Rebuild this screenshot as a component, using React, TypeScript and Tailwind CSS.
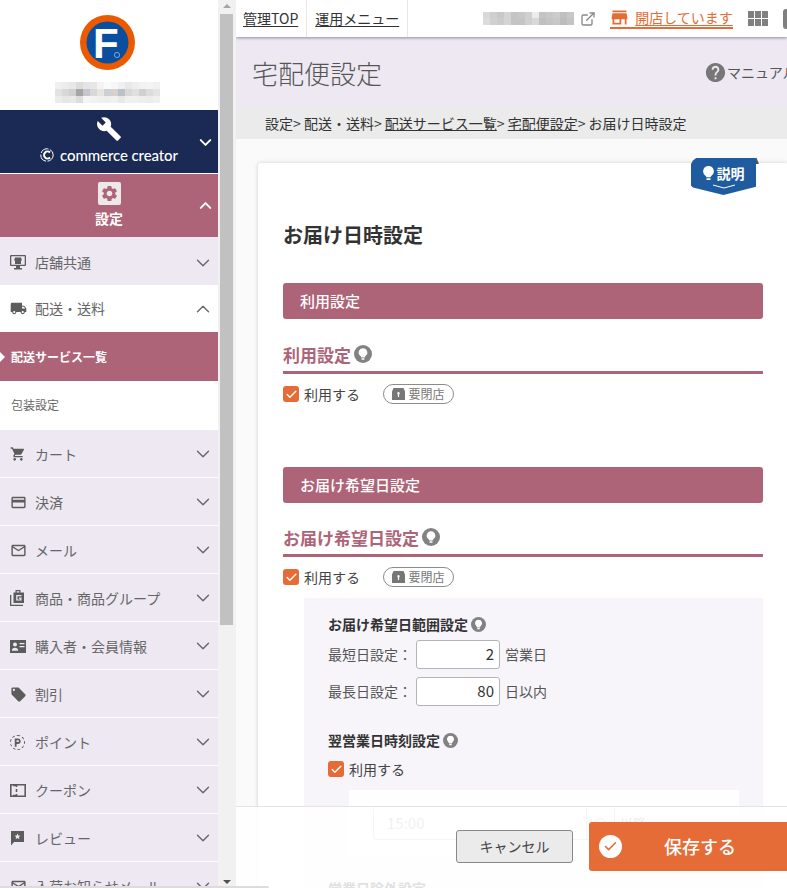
import { ChevronDown, ChevronUp, ExternalLink, Check } from "lucide-react";
import {
    MdCreditCard,
    MdLocalOffer,
    MdLocalShipping,
    MdMailOutline,
    MdShoppingCart,
    MdStore,
    MdHelp,
    MdSettings,
    MdBuild,
    MdOutlineLocalParking,
} from "react-icons/md";
import type { ReactNode } from "react";

const FONT = "font-['Noto_Sans_CJK_JP','Noto_Sans',sans-serif]";

const shopNamePixels = [
    "#f0f0f0", "#ececec", "#e8e8e8", "#dcdcdc", "#e4e4e4", "#e6e6e6", "#f4f4f4", "#fafafa", "#f4f6f8", "#f0f0f0", "#e8e8e8", "#eeeeee", "#f2f2f2", "#f4f4f4", "#f0f0f0",
    "#e2e2e2", "#d8d8d8", "#d0d0d0", "#a8a4a4", "#c4c8cc", "#d8d8d8", "#e8e4e0", "#ccd0d4", "#d8d0cc", "#bcc0c8", "#d8d8d8", "#e0e0e0", "#d0d0d0", "#dcdcdc", "#e4e4e4",
    "#ececec", "#e6e6e6", "#e8e8e8", "#dcdcdc", "#f4f6f6", "#f2f2f2", "#f0f0f0", "#eeeeee", "#f0f0f0", "#e8e8e8", "#f0f0f0", "#f0f0f0", "#eeeeee", "#ececec", "#f0f0f0",
];

const urlPixels = [
    "#d8d8d8", "#cfcfcf", "#c8c8c8", "#d4d4d4", "#c4c4c4", "#c8c8c8", "#d0d0d0", "#ececec", "#c4c4c4", "#c8c8c8", "#cccccc", "#c0c0c0", "#c8c8c8",
    "#dcdcdc", "#d0d0d0", "#cccccc", "#d4d4d4", "#c4c4c4", "#c4c4c4", "#d0d0d0", "#d8d8d8", "#c0c0c0", "#c4c4c4", "#c8c8c8", "#bcbcbc", "#c4c4c4",
];

function Bulb({ size = 18 }: { size?: number }) {
    return (
        <svg width={size} height={size} viewBox="0 0 18 18" className="shrink-0">
            <circle cx="9" cy="9" r="9" fill="#828282" />
            <path d="M9 3.200a4.300 4.300 0 0 0-2.500 7.800c.5.400.7.900.7 1.500h3.600c0-.6.200-1.100.7-1.500A4.300 4.300 0 0 0 9 3.200Z" fill="#fff" />
            <rect x="7.400" y="13.200" width="3.200" height="1.500" rx=".6" fill="#fff" />
        </svg>
    );
}

function CheckBox() {
    return (
        <span className="flex h-4 w-4 shrink-0 items-center justify-center rounded-[3px] bg-[#e66c37]">
            <Check size={13} strokeWidth={2.5} className="text-white" />
        </span>
    );
}

function MonitorIcon() {
    return (
        <svg width="16" height="15" viewBox="0 0 16 15" fill="#5c5c5c">
            <path d="M1 0h14a1 1 0 0 1 1 1v9a1 1 0 0 1-1 1h-5v2h2v1.500H4V13h2v-2H1a1 1 0 0 1-1-1V1a1 1 0 0 1 1-1Zm.300 1.300v8.400h13.400V1.300Z" />
            <path d="M5 2.500h6l.8 2.200v.8H11V9H5V5.500h-.8v-.8Z" />
        </svg>
    );
}

function BagIcon() {
    return (
        <svg width="16" height="16" viewBox="0 0 16 16" fill="#5c5c5c">
            <path d="M5.500 0h5v2.500H14V13H3.500V2.500h2Zm1.200 1.200v1.300h2.600V1.200ZM6.200 5v5.500h5.300V7.500H9v1.200h1.200v.7H7.500V6.200h4V5Z" fillRule="evenodd" />
            <path d="M0 5h1.300v9.700H13V16H0Z" />
        </svg>
    );
}

function MemberIcon() {
    return (
        <svg width="16" height="13" viewBox="0 0 16 13" fill="#5c5c5c">
            <path d="M0 0h16v13H0Zm5 2.500a2 2 0 1 0 0 4 2 2 0 0 0 0-4ZM1.800 10.700h6.400c0-2-1.400-3-3.200-3s-3.200 1-3.200 3ZM9.500 3v1.300h5V3Zm0 3v1.300h5V6Z" fillRule="evenodd" />
        </svg>
    );
}

function CouponIcon() {
    return (
        <svg width="16" height="13" viewBox="0 0 16 13" fill="none" stroke="#5c5c5c" strokeWidth="1.600">
            <path d="M.8.800h14.400v11.400H.8Z" />
            <path d="M6.500 0v3M6.500 5v3M6.500 10v3" />
            <path d="M3 .8h3v1.500H3Zm0 9.900h3v1.500H3Z" fill="#5c5c5c" stroke="none" />
        </svg>
    );
}

function ReviewIcon() {
    return (
        <svg width="15" height="15" viewBox="0 0 15 15">
            <path d="M1 0h13v11H4l-3 3.500Z" fill="#5c5c5c" />
            <path d="m7.500 2.500.9 2 2.100.2-1.600 1.400.5 2.100-1.900-1.100-1.900 1.100.5-2.100-1.600-1.400 2.100-.2Z" fill="#ede8f2" />
        </svg>
    );
}

function NavRow({ icon, label, open, white, first }: { icon: ReactNode; label: string; open?: boolean; white?: boolean; first?: boolean }) {
    return (
        <div
            className={`flex shrink-0 items-center justify-between pl-[10px] pr-[4px] text-[14px] text-[#666] ${white ? "h-[47px] bg-white" : first ? "h-[48px] bg-[#ede8f2] pt-[3px]" : "h-[48px] border-b border-white bg-[#ede8f2] pt-[1px]"}`}
        >
            <div className="flex items-center">
                <span className="flex w-[25px] shrink-0 items-center text-[#5c5c5c]">{icon}</span>
                <span>{label}</span>
            </div>
            {open ? <ChevronUp size={22} strokeWidth={1.5} className="text-[#666]" /> : <ChevronDown size={22} strokeWidth={1.5} className="text-[#666]" />}
        </div>
    );
}

function SectionBand({ children }: { children: ReactNode }) {
    return <div className="flex h-[36px] items-center rounded-[3px] bg-[#ae6478] pl-[17px] text-[15px] font-medium text-white">{children}</div>;
}

function SubHeading({ children }: { children: ReactNode }) {
    return (
        <div className="flex h-[34px] items-center gap-[3px] border-b-[3px] border-[#ae6478] pb-[3px] text-[17px] font-bold leading-none text-[#ae6478]">
            {children}
            <Bulb />
        </div>
    );
}

function UseRow() {
    return (
        <div className="flex h-[40px] items-center text-[14px] text-[#444]">
            <CheckBox />
            <span className="ml-[5px]">利用する</span>
            <span className="ml-[23px] flex h-[20px] w-[71px] items-center justify-center gap-[3px] rounded-full border border-[#8c8c8c] bg-white text-[12px] text-[#777]">
                <svg width="13" height="12" viewBox="0 0 13 12" fill="#777">
                    <path d="M1.500 0h10L13 3.500V12H0V3.500ZM6.500 4a1.300 1.300 0 0 0-.6 2.400V9h1.200V6.400A1.300 1.300 0 0 0 6.500 4Z" fillRule="evenodd" />
                </svg>
                要閉店
            </span>
        </div>
    );
}

function RangeRow({ label, value, unit }: { label: string; value: string; unit: string }) {
    return (
        <div className="flex h-[37px] items-center text-[14px] text-[#555]">
            <span className="w-[88px]">{label}</span>
            <span className="flex h-[29px] w-[84px] items-center justify-end rounded-[3px] border border-[#b4b4b4] bg-white pr-[5px] text-[15px] text-[#333]">{value}</span>
            <span className="ml-[5px]">{unit}</span>
        </div>
    );
}

export default function App() {
    return (
        <div className={`relative flex h-[888px] w-[787px] overflow-hidden bg-white ${FONT}`}>
            <aside className="relative flex h-full w-[236px] shrink-0">
                <div className="flex h-full w-[218px] shrink-0 flex-col overflow-hidden">
                    <div className="flex h-[110px] shrink-0 flex-col items-center pr-[3px]">
                        <svg width="55" height="55" viewBox="0 0 55 55" className="mt-[15px]">
                            <circle cx="27.500" cy="27.500" r="27.500" fill="#ec5a00" />
                            <circle cx="27.500" cy="27.500" r="21" fill="#0a4ea0" />
                            <text x="13" y="43" fontFamily="Liberation Sans" fontWeight="700" fontSize="42" fill="#fff">F</text>
                            <circle cx="37" cy="40" r="2.600" fill="none" stroke="#9fb9d8" strokeWidth=".8" />
                        </svg>
                        <div className="mt-[12px] grid grid-cols-[repeat(15,7px)] grid-rows-[7px_7px_7px]">
                            {shopNamePixels.map((color, i) => (
                                <span key={i} style={{ backgroundColor: color }} />
                            ))}
                        </div>
                    </div>
                    <div className="relative flex h-[63px] shrink-0 flex-col items-center bg-[#1b2a54] text-white">
                        <MdBuild size={26} className="mt-[6px]" />
                        <div className="mt-[3px] flex items-center text-[15px] font-medium leading-[20px] tracking-[-0.1px]">
                            <svg width="14" height="14" viewBox="0 0 14 14" className="mr-[6px]" fill="none" stroke="#fff">
                                <circle cx="7" cy="7" r="6.200" strokeWidth="1" strokeDasharray="9 1.500" />
                                <path d="M10 4.500a3.500 3.500 0 1 0 0 5" strokeWidth="2" />
                            </svg>
                            <span className="font-['Lato',sans-serif]">commerce creator</span>
                        </div>
                        <ChevronDown size={19} strokeWidth={2.5} className="absolute right-[3px] top-[23px]" />
                    </div>
                    <div className="relative mt-[1px] flex h-[63px] shrink-0 flex-col items-center bg-[#ae6478] text-white">
                        <span className="mt-[8px] flex h-[23px] w-[23px] items-center justify-center rounded-[2px] bg-[#ede8ea]">
                            <MdSettings size={19} className="text-[#ae6478]" />
                        </span>
                        <span className="mt-[3px] text-[14px] font-bold leading-[20px]">設定</span>
                        <ChevronUp size={19} strokeWidth={2.5} className="absolute right-[3px] top-[22px]" />
                    </div>
                    <NavRow icon={<MonitorIcon />} label="店舗共通" first />
                    <NavRow icon={<MdLocalShipping size={17} />} label="配送・送料" open white />
                    <div className="relative flex h-[49px] shrink-0 items-center bg-[#ae6478] pl-[11px] text-[12px] font-bold text-white">
                        <span className="absolute left-0 top-[20px] h-0 w-0 border-y-[5px] border-l-[5px] border-y-transparent border-l-white" />
                        配送サービス一覧
                    </div>
                    <div className="flex h-[49px] shrink-0 items-center bg-white pb-[2px] pl-[11px] text-[12px] text-[#666]">包装設定</div>
                    <NavRow icon={<MdShoppingCart size={16} />} label="カート" />
                    <NavRow icon={<MdCreditCard size={17} />} label="決済" />
                    <NavRow icon={<MdMailOutline size={17} />} label="メール" />
                    <NavRow icon={<BagIcon />} label="商品・商品グループ" />
                    <NavRow icon={<MemberIcon />} label="購入者・会員情報" />
                    <NavRow icon={<MdLocalOffer size={17} />} label="割引" />
                    <NavRow
                        icon={
                            <span className="flex h-[15px] w-[15px] items-center justify-center rounded-full border border-dashed border-[#5c5c5c]">
                                <MdOutlineLocalParking size={11} />
                            </span>
                        }
                        label="ポイント"
                    />
                    <NavRow icon={<CouponIcon />} label="クーポン" />
                    <NavRow icon={<ReviewIcon />} label="レビュー" />
                    <NavRow icon={<MdMailOutline size={17} />} label="入荷お知らせメール" />
                </div>
                <div className="relative h-full w-[18px] bg-[#f1f1f1]">
                    <span className="absolute left-[5px] top-[4px] h-0 w-0 border-x-[4px] border-b-[4px] border-x-transparent border-b-[#a3a3a3]" />
                    <span className="absolute left-[2px] top-[14px] h-[611px] w-[13px] bg-[#c1c1c1]" />
                    <span className="absolute bottom-[4px] left-[5px] h-0 w-0 border-x-[4px] border-t-[4px] border-x-transparent border-t-[#505050]" />
                </div>
            </aside>

            <main className="relative h-full min-w-0 flex-1 overflow-hidden bg-[#fafafa]">
                <header className="relative z-10 flex h-[37px] items-center bg-white shadow-[0_1px_3px_rgba(0,0,0,0.4)]">
                    <div className="flex h-full shrink-0 items-center border-r border-[#e8e8e8] pl-[7px] pr-[8px] text-[14px] whitespace-nowrap text-[#333] underline underline-offset-2">管理TOP</div>
                    <div className="flex h-full shrink-0 items-center border-r border-[#e8e8e8] pl-[8px] pr-[8px] text-[14px] whitespace-nowrap text-[#333] underline underline-offset-2">運用メニュー</div>
                    <div className="ml-[75px] grid shrink-0 grid-cols-[repeat(13,7px)] grid-rows-[6px_7px]">
                        {urlPixels.map((color, i) => (
                            <span key={i} style={{ backgroundColor: color }} />
                        ))}
                    </div>
                    <ExternalLink size={16} className="ml-[6px] shrink-0 text-[#888]" />
                    <div className="ml-[14px] flex h-[21px] shrink-0 items-center gap-[5px] border-b-[2px] border-[#e66c37] text-[14px] whitespace-nowrap text-[#e66c37]">
                        <MdStore size={21} className="-ml-[1px] shrink-0" />
                        <span className="underline underline-offset-2">開店しています</span>
                    </div>
                    <div className="ml-[15px] grid shrink-0 grid-cols-[6px_6px_6px] grid-rows-[7px_7px] gap-[1px]">
                        {[0, 1, 2, 3, 4, 5].map((i) => (
                            <span key={i} className="bg-[#808080]" />
                        ))}
                    </div>
                    <span className="ml-[15px] h-[20px] w-[10px] shrink-0 rounded-l-[3px] bg-[#808080]" />
                </header>

                <div className="flex h-[70px] items-center justify-between bg-[#ede8f2] pl-[16px]">
                    <h1 className="text-[26px] font-light text-[#555]">宅配便設定</h1>
                    <div className="flex w-[82px] shrink-0 items-center text-[14px] whitespace-nowrap text-[#555]">
                        <MdHelp size={23} className="-ml-[1px] shrink-0 text-[#777]" />
                        マニュアル
                    </div>
                </div>

                <div className="flex h-[32px] items-center bg-[#ebebeb] pl-[29px] text-[14px] whitespace-pre text-[#333]">
                    {"設定> 配送・送料> "}
                    <span className="underline">配送サービス一覧</span>
                    {"> "}
                    <span className="underline">宅配便設定</span>
                    {"> お届け日時設定"}
                </div>

                <div className="relative ml-[22px] mt-[24px] w-[530px] rounded-[3px] bg-white px-[25px] shadow-[0_0_4px_rgba(0,0,0,0.18)]">
                    <span className="absolute left-[495px] top-[-5px] h-[6px] w-[6px] bg-[#555] [clip-path:polygon(0_0,60%_0,100%_100%,0_100%)]" />
                    <div className="absolute left-[433px] top-[-5px] flex h-[37px] w-[65px] flex-col items-center bg-[#1f5c9f] pt-[6px] text-white [clip-path:polygon(0_16%,3%_7%,8%_0,92%_0,100%_0,100%_78%,50%_100%,3%_80%,0_74%)]">
                        <div className="flex items-center gap-[3px] text-[14px] font-bold leading-[18px]">
                            <svg width="11" height="15" viewBox="0 0 11 15" fill="#fff">
                                <path d="M5.500 0a5.300 5.300 0 0 0-3 9.700c.6.400.8 1 .8 1.600h4.400c0-.6.200-1.200.8-1.600A5.300 5.300 0 0 0 5.500 0ZM3.500 12.300h4V14h-4Z" />
                            </svg>
                            説明
                        </div>
                        <svg width="22" height="5" viewBox="0 0 22 5" className="mt-[2px]" fill="none" stroke="#fff" strokeWidth="1">
                            <path d="M0 1l11 3 11-3" />
                        </svg>
                    </div>

                    <h2 className="pt-[56px] text-[20px] leading-[32px] font-bold text-[#333]">お届け日時設定</h2>
                    <div className="mt-[32px]">
                        <SectionBand>利用設定</SectionBand>
                    </div>
                    <div className="mt-[21px]">
                        <SubHeading>利用設定</SubHeading>
                    </div>
                    <UseRow />

                    <div className="mt-[53px]">
                        <SectionBand>お届け希望日設定</SectionBand>
                    </div>
                    <div className="mt-[20px]">
                        <SubHeading>お届け希望日設定</SubHeading>
                    </div>
                    <UseRow />

                    <div className="ml-[21px] mt-[1px] bg-[#f7f5fa] pl-[24px] pr-[24px] pt-[17px]">
                        <div className="flex h-[18px] items-center gap-[3px] text-[14px] font-bold text-[#333]">
                            お届け希望日範囲設定
                            <Bulb size={15} />
                        </div>
                        <div className="mt-[3px]">
                            <RangeRow label="最短日設定：" value="2" unit="営業日" />
                            <RangeRow label="最長日設定：" value="80" unit="日以内" />
                        </div>
                        <div className="mt-[21px] flex h-[18px] items-center gap-[3px] text-[14px] font-bold text-[#333]">
                            翌営業日時刻設定
                            <Bulb size={15} />
                        </div>
                        <div className="mt-[9px] flex h-[22px] items-center text-[14px] text-[#444]">
                            <CheckBox />
                            <span className="ml-[5px]">利用する</span>
                        </div>
                        <div className="mt-[10px] ml-[21px] h-[65px] w-[390px] bg-white pl-[24px] pt-[16px]">
                            <div className="flex items-center">
                                <span className="flex h-[34px] w-[242px] shrink-0 items-center justify-between rounded-[3px] border border-[#bbb] pl-[13px] text-[15px] text-[#999]">
                                    15:00
                                    <span className="flex h-full w-[28px] items-center justify-center border-l border-[#bbb]">
                                        <span className="h-[11px] w-[11px] rounded-full border border-[#999]" />
                                    </span>
                                </span>
                                <span className="ml-[5px] text-[13px] text-[#777]">以降</span>
                            </div>
                        </div>
                        <div className="mt-[23px] text-[14px] leading-[20px] font-bold text-[#333]">営業日除外設定</div>
                        <div className="h-[60px]" />
                    </div>
                </div>

                <div className="absolute bottom-0 left-0 right-0 h-[82px] border-t border-[#e4e4e4] bg-white/85">
                    <button className="absolute left-[220px] top-[23px] h-[33px] w-[117px] rounded-[3px] border border-[#888] bg-[#ebebeb] text-[14px] text-[#444]">キャンセル</button>
                    <button className="absolute left-[353px] top-[15px] flex h-[49px] w-[198px] items-center rounded-l-[3px] bg-[#e66c37] text-[18px] font-medium text-white">
                        <span className="ml-[10px] flex h-[23px] w-[23px] items-center justify-center rounded-full bg-white">
                            <Check size={15} strokeWidth={2.5} className="text-[#e66c37]" />
                        </span>
                        <span className="ml-[42px]">保存する</span>
                    </button>
                </div>
            </main>
            <div className="absolute bottom-0 left-0 h-[2px] w-[269px] rounded-tr-[2px] bg-[#dcdcdc]" />
        </div>
    );
}
